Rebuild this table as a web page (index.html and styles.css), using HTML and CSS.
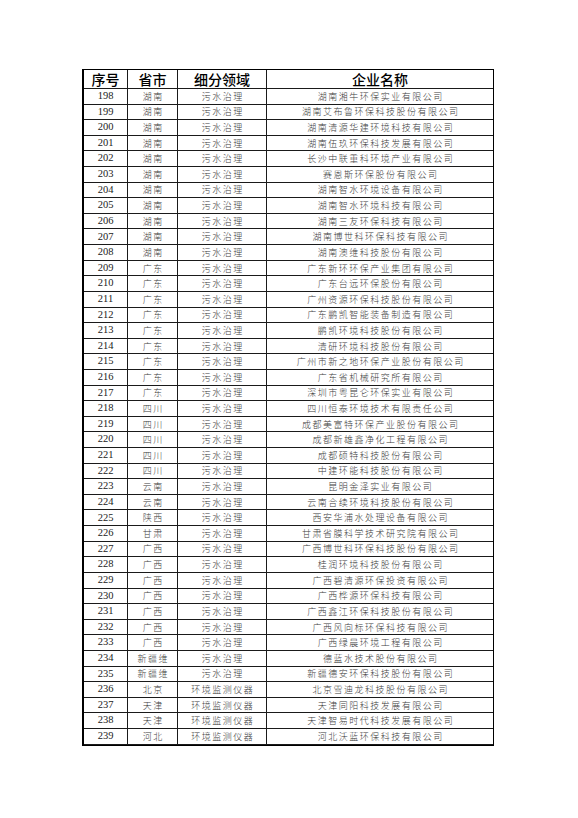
FILE: index.html
```html
<!DOCTYPE html>
<html lang="zh-CN">
<head>
<meta charset="utf-8">
<title>企业名单</title>
<link rel="stylesheet" href="styles.css">
</head>
<body>
<div class="sheet">
  <div class="row head">
    <div class="cell">序号</div><div class="cell">省市</div><div class="cell">细分领域</div><div class="cell">企业名称</div>
  </div>
  <div class="row"><div class="cell num">198</div><div class="cell">湖南</div><div class="cell">污水治理</div><div class="cell">湖南湘牛环保实业有限公司</div></div>
  <div class="row"><div class="cell num">199</div><div class="cell">湖南</div><div class="cell">污水治理</div><div class="cell">湖南艾布鲁环保科技股份有限公司</div></div>
  <div class="row"><div class="cell num">200</div><div class="cell">湖南</div><div class="cell">污水治理</div><div class="cell">湖南清源华建环境科技有限公司</div></div>
  <div class="row"><div class="cell num">201</div><div class="cell">湖南</div><div class="cell">污水治理</div><div class="cell">湖南伍玖环保科技发展有限公司</div></div>
  <div class="row"><div class="cell num">202</div><div class="cell">湖南</div><div class="cell">污水治理</div><div class="cell">长沙中联重科环境产业有限公司</div></div>
  <div class="row"><div class="cell num">203</div><div class="cell">湖南</div><div class="cell">污水治理</div><div class="cell">赛恩斯环保股份有限公司</div></div>
  <div class="row"><div class="cell num">204</div><div class="cell">湖南</div><div class="cell">污水治理</div><div class="cell">湖南智水环境设备有限公司</div></div>
  <div class="row"><div class="cell num">205</div><div class="cell">湖南</div><div class="cell">污水治理</div><div class="cell">湖南智水环境科技有限公司</div></div>
  <div class="row"><div class="cell num">206</div><div class="cell">湖南</div><div class="cell">污水治理</div><div class="cell">湖南三友环保科技有限公司</div></div>
  <div class="row"><div class="cell num">207</div><div class="cell">湖南</div><div class="cell">污水治理</div><div class="cell">湖南博世科环保科技有限公司</div></div>
  <div class="row"><div class="cell num">208</div><div class="cell">湖南</div><div class="cell">污水治理</div><div class="cell">湖南澳维科技股份有限公司</div></div>
  <div class="row"><div class="cell num">209</div><div class="cell">广东</div><div class="cell">污水治理</div><div class="cell">广东新环环保产业集团有限公司</div></div>
  <div class="row"><div class="cell num">210</div><div class="cell">广东</div><div class="cell">污水治理</div><div class="cell">广东台远环保股份有限公司</div></div>
  <div class="row"><div class="cell num">211</div><div class="cell">广东</div><div class="cell">污水治理</div><div class="cell">广州资源环保科技股份有限公司</div></div>
  <div class="row"><div class="cell num">212</div><div class="cell">广东</div><div class="cell">污水治理</div><div class="cell">广东鹏凯智能装备制造有限公司</div></div>
  <div class="row"><div class="cell num">213</div><div class="cell">广东</div><div class="cell">污水治理</div><div class="cell">鹏凯环境科技股份有限公司</div></div>
  <div class="row"><div class="cell num">214</div><div class="cell">广东</div><div class="cell">污水治理</div><div class="cell">清研环境科技股份有限公司</div></div>
  <div class="row"><div class="cell num">215</div><div class="cell">广东</div><div class="cell">污水治理</div><div class="cell">广州市新之地环保产业股份有限公司</div></div>
  <div class="row"><div class="cell num">216</div><div class="cell">广东</div><div class="cell">污水治理</div><div class="cell">广东省机械研究所有限公司</div></div>
  <div class="row"><div class="cell num">217</div><div class="cell">广东</div><div class="cell">污水治理</div><div class="cell">深圳市粤昆仑环保实业有限公司</div></div>
  <div class="row"><div class="cell num">218</div><div class="cell">四川</div><div class="cell">污水治理</div><div class="cell">四川恒泰环境技术有限责任公司</div></div>
  <div class="row"><div class="cell num">219</div><div class="cell">四川</div><div class="cell">污水治理</div><div class="cell">成都美富特环保产业股份有限公司</div></div>
  <div class="row"><div class="cell num">220</div><div class="cell">四川</div><div class="cell">污水治理</div><div class="cell">成都新雄鑫净化工程有限公司</div></div>
  <div class="row"><div class="cell num">221</div><div class="cell">四川</div><div class="cell">污水治理</div><div class="cell">成都硕特科技股份有限公司</div></div>
  <div class="row"><div class="cell num">222</div><div class="cell">四川</div><div class="cell">污水治理</div><div class="cell">中建环能科技股份有限公司</div></div>
  <div class="row"><div class="cell num">223</div><div class="cell">云南</div><div class="cell">污水治理</div><div class="cell">昆明金泽实业有限公司</div></div>
  <div class="row"><div class="cell num">224</div><div class="cell">云南</div><div class="cell">污水治理</div><div class="cell">云南合续环境科技股份有限公司</div></div>
  <div class="row"><div class="cell num">225</div><div class="cell">陕西</div><div class="cell">污水治理</div><div class="cell">西安华浦水处理设备有限公司</div></div>
  <div class="row"><div class="cell num">226</div><div class="cell">甘肃</div><div class="cell">污水治理</div><div class="cell">甘肃省膜科学技术研究院有限公司</div></div>
  <div class="row"><div class="cell num">227</div><div class="cell">广西</div><div class="cell">污水治理</div><div class="cell">广西博世科环保科技股份有限公司</div></div>
  <div class="row"><div class="cell num">228</div><div class="cell">广西</div><div class="cell">污水治理</div><div class="cell">桂润环境科技股份有限公司</div></div>
  <div class="row"><div class="cell num">229</div><div class="cell">广西</div><div class="cell">污水治理</div><div class="cell">广西碧清源环保投资有限公司</div></div>
  <div class="row"><div class="cell num">230</div><div class="cell">广西</div><div class="cell">污水治理</div><div class="cell">广西桦源环保科技有限公司</div></div>
  <div class="row"><div class="cell num">231</div><div class="cell">广西</div><div class="cell">污水治理</div><div class="cell">广西鑫江环保科技股份有限公司</div></div>
  <div class="row"><div class="cell num">232</div><div class="cell">广西</div><div class="cell">污水治理</div><div class="cell">广西风向标环保科技有限公司</div></div>
  <div class="row"><div class="cell num">233</div><div class="cell">广西</div><div class="cell">污水治理</div><div class="cell">广西绿晨环境工程有限公司</div></div>
  <div class="row"><div class="cell num">234</div><div class="cell">新疆维</div><div class="cell">污水治理</div><div class="cell">德蓝水技术股份有限公司</div></div>
  <div class="row"><div class="cell num">235</div><div class="cell">新疆维</div><div class="cell">污水治理</div><div class="cell">新疆德安环保科技股份有限公司</div></div>
  <div class="row"><div class="cell num">236</div><div class="cell">北京</div><div class="cell">环境监测仪器</div><div class="cell">北京雪迪龙科技股份有限公司</div></div>
  <div class="row"><div class="cell num">237</div><div class="cell">天津</div><div class="cell">环境监测仪器</div><div class="cell">天津同阳科技发展有限公司</div></div>
  <div class="row"><div class="cell num">238</div><div class="cell">天津</div><div class="cell">环境监测仪器</div><div class="cell">天津智易时代科技发展有限公司</div></div>
  <div class="row"><div class="cell num">239</div><div class="cell">河北</div><div class="cell">环境监测仪器</div><div class="cell">河北沃蓝环保科技有限公司</div></div>
</div>
</body>
</html>
```
FILE: styles.css
```css
html, body {
  margin: 0;
  padding: 0;
  background: #fff;
}
body {
  width: 578px;
  height: 818px;
  overflow: hidden;
  font-family: "Noto Sans CJK SC", sans-serif;
}
.sheet {
  box-sizing: border-box;
  width: 412px;
  margin: 69px 0 0 82px;
  border-top: 1px solid #000;
  border-right: 1px solid #000;
  border-left: 2px solid #000;
  border-bottom: 1px solid #000;
}
.row {
  display: grid;
  grid-template-columns: 44px 50px 89px 1fr;
  box-sizing: border-box;
  height: 15.62px;
  border-bottom: 1px solid #1a1a1a;
}
.row.head {
  height: 19px;
}
.cell {
  display: flex;
  align-items: center;
  justify-content: center;
  border-right: 1px solid #1a1a1a;
  font-size: 9px;
  font-weight: 300;
  letter-spacing: 1.5px;
  padding-left: 1.5px;
  color: #3c3c3c;
  white-space: nowrap;
  line-height: 1;
}
.cell:last-child {
  border-right: none;
}
.cell.num {
  font-family: "Liberation Serif", serif;
  font-size: 10.5px;
  letter-spacing: 0;
  padding-left: 0;
  font-weight: 400;
  color: #222;
}
.head .cell {
  font-size: 14px;
  font-weight: 500;
  letter-spacing: 0;
  padding-left: 0;
  color: #000;
}
```
